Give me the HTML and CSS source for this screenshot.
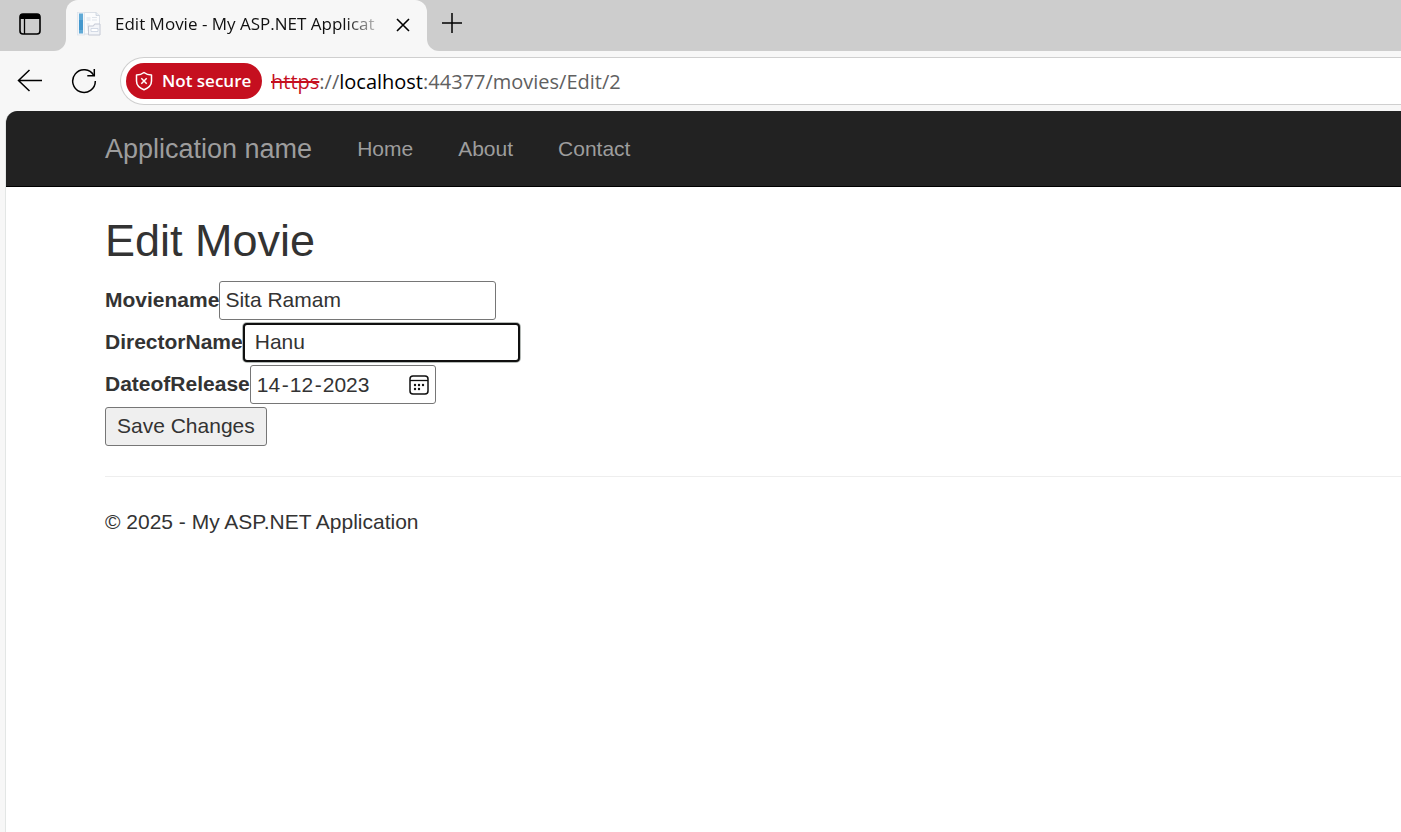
FILE: index.html
```html
<!DOCTYPE html>
<html lang="en">
<head>
<meta charset="utf-8">
<title>Edit Movie - My ASP.NET Application</title>
<link rel="stylesheet" href="styles.css">
</head>
<body>
<div class="browser">
  <div class="tab-strip">
    <button class="icon-button tab-actions" type="button" aria-label="Tab actions">
      <svg width="22" height="22" viewBox="0 0 22 22"><rect x="1" y="1" width="20" height="20" rx="3" fill="none" stroke="#000" stroke-width="1.6"/><path d="M1 6V4a3 3 0 0 1 3-3h14a3 3 0 0 1 3 3v2z"/><path d="M5.500 5v16" stroke="#000" stroke-width="1.300"/></svg>
    </button>
    <div class="tab">
      <svg class="favicon" width="24" height="24" viewBox="0 0 24 24">
        <path d="M7 .5h12l3.500 3V22H7z" fill="#fbfcfd" stroke="#d3d9e2" stroke-width=".8"/>
        <path d="M19 .5v3h3.500" fill="#e8eef5" stroke="#c9d0da" stroke-width=".8"/>
        <rect x=".5" y=".5" width="7" height="22.500" fill="#f1f5f9" stroke="#dbe2ea" stroke-width=".7"/>
        <path d="M2 1.500h4v20H2z" fill="#5fa9d6"/><path d="M2 8h4v10H2z" fill="#4397cd"/>
        <path d="M9.500 5h4v4h-4zM9.500 11h3v8h-2z" fill="#e9edf3"/>
        <path d="M15 5.500h5M15 8h5" stroke="#dfe4eb" stroke-width="1.200"/>
        <path d="M11.500 14h5l1-2H23v11H11.500z" fill="#f3f5f9" stroke="#c3c8d4" stroke-width="1"/>
        <path d="M14 16.500h7v3h-7z" fill="#fff" stroke="#c9d2df" stroke-width=".8"/>
      </svg>
      <span class="tab-title">Edit Movie - My ASP.NET Applicat</span>
      <button class="icon-button tab-close" type="button" aria-label="Close tab">
        <svg width="14" height="14" viewBox="0 0 14 14"><path d="M1 1l12 12M13 1L1 13" stroke="#000" stroke-width="1.6"/></svg>
      </button>
    </div>
    <button class="icon-button new-tab" type="button" aria-label="New tab">
      <svg width="22" height="22" viewBox="0 0 22 22"><path d="M11 1v20M1 11h20" stroke="#000" stroke-width="1.5"/></svg>
    </button>
  </div>
  <div class="toolbar">
    <button class="icon-button" type="button" aria-label="Back">
      <svg width="26" height="24" viewBox="0 0 26 24"><path d="M25 11.500H1.500M12.500 1L1.500 11.500 12.500 22" fill="none" stroke="#000" stroke-width="1.5"/></svg>
    </button>
    <button class="icon-button" type="button" aria-label="Refresh">
      <svg width="26" height="26" viewBox="0 0 26 26"><path d="M22.800 7.500A11.300 11.300 0 1 0 24.300 13" fill="none" stroke="#000" stroke-width="1.5"/><path d="M23.300 1v6.800h-7" fill="none" stroke="#000" stroke-width="1.5"/></svg>
    </button>
    <div class="address-bar">
      <button class="security" type="button">
        <svg width="18" height="20" viewBox="0 0 18 20"><path d="M9 1.500C7 3.200 4.500 4 1.500 4v6c0 4.500 3 7 7.500 8.700 4.500-1.700 7.500-4.200 7.500-8.700V4c-3 0-5.500-.8-7.500-2.500z" fill="none" stroke="#fff" stroke-width="1.5" stroke-linejoin="round"/><path d="M6.300 7.300l5.400 5.400m0-5.400l-5.400 5.400" stroke="#fff" stroke-width="1.5"/></svg>
        Not secure
      </button>
      <div class="url"><s>https</s>://<b>localhost</b>:44377/movies/Edit/2</div>
    </div>
  </div>
  <div class="page">
    <nav class="navbar">
      <a class="brand" href="#">Application name</a>
      <a href="#">Home</a>
      <a href="#">About</a>
      <a href="#">Contact</a>
    </nav>
    <main class="content">
      <h2>Edit Movie</h2>
      <form class="form">
        <div class="row"><label for="name">Moviename</label><input class="field" id="name" type="text" value="Sita Ramam"></div>
        <div class="row"><label for="director">DirectorName</label><input class="field field-active" id="director" type="text" value="Hanu"></div>
        <div class="row">
          <label for="day">DateofRelease</label>
          <div class="date">
            <input class="part" id="day" type="text" value="14" aria-label="Day of release">-<input class="part" type="text" value="12" aria-label="Month of release">-<input class="part part-year" type="text" value="2023" aria-label="Year of release">
            <button class="icon-button picker" type="button" aria-label="Show calendar">
              <svg width="20" height="20" viewBox="0 0 20 20"><rect x="1" y="1" width="18" height="18" rx="3" fill="none" stroke="#101010" stroke-width="1.5"/><path d="M1 5.500h18" stroke="#101010" stroke-width="1.3"/><g fill="#101010"><circle cx="6" cy="10" r="1.200"/><circle cx="10" cy="10" r="1.200"/><circle cx="14" cy="10" r="1.200"/><circle cx="6" cy="14" r="1.200"/><circle cx="10" cy="14" r="1.200"/></g></svg>
            </button>
          </div>
        </div>
        <button class="save" type="button">Save Changes</button>
      </form>
      <hr>
      <footer>© 2025 - My ASP.NET Application</footer>
    </main>
  </div>
</div>
</body>
</html>
```
FILE: styles.css
```css
* { box-sizing: border-box; }
body {
  margin: 0;
  overflow-x: hidden;
  font: 21px/30px "Liberation Sans", Arial, sans-serif;
  color: #333;
}
button, input { font: inherit; color: inherit; }
.browser {
  min-height: 100vh;
  display: flex;
  flex-direction: column;
  background: #f7f7f7;
}
.icon-button {
  display: flex;
  align-items: center;
  justify-content: center;
  padding: 0;
  border: 0;
  background: none;
}
.tab-strip {
  display: flex;
  height: 51px;
  background: linear-gradient(#cdcdcd 50%, #f7f7f7 50%);
}
.tab-actions {
  width: 66px;
  padding: 0 6px 3px 0;
  background: #cdcdcd;
  border-radius: 0 0 12px 0;
}
.tab {
  display: flex;
  align-items: center;
  width: 361px;
  padding: 0 17px 3px 11px;
  background: #f7f7f7;
  border-radius: 12px 12px 0 0;
}
.tab-title {
  flex: 1;
  margin: 0 10px 0 14px;
  white-space: nowrap;
  font: 17px/24px "Open Sans", "Noto Sans", sans-serif;
  color: #111;
  -webkit-mask-image: linear-gradient(90deg, #000 85%, transparent);
  mask-image: linear-gradient(90deg, #000 85%, transparent);
}
.tab-close { padding-top: 2px; }
.new-tab {
  flex: 1;
  justify-content: flex-start;
  padding: 0 0 5px 14px;
  background: #cdcdcd;
  border-radius: 0 0 0 12px;
}
.toolbar {
  display: flex;
  align-items: center;
  gap: 28px;
  height: 60px;
  padding-left: 17px;
}
.address-bar {
  flex: 1;
  display: flex;
  align-items: center;
  gap: 9px;
  height: 48px;
  margin-left: -5px;
  padding-left: 5px;
  background: #fff;
  border: 1px solid #cfcfcf;
  border-right: 0;
  border-radius: 24px 0 0 24px;
}
.security {
  display: flex;
  align-items: center;
  gap: 9px;
  width: 136px;
  height: 36px;
  padding: 0 0 0 9px;
  border: 0;
  border-radius: 18px;
  background: #c50f1f;
  color: #fff;
  font: 600 17px/24px "Open Sans", "Noto Sans", sans-serif;
  white-space: nowrap;
}
.url {
  padding-top: 2px;
  font: 20px/28px "Open Sans", "Noto Sans", sans-serif;
  color: #606060;
}
.url s { color: #c50f1f; text-decoration-thickness: 2px; }
.url b { font-weight: 400; color: #000; }
.page {
  flex: 1;
  margin-left: 5px;
  border-left: 1px solid #e3e6e5;
  border-top-left-radius: 12px;
  background: #fff;
  overflow: hidden;
}
.navbar {
  display: flex;
  align-items: center;
  gap: 45px;
  height: 76px;
  padding-left: 99px;
  background: #222;
  border-bottom: 1px solid #000;
}
.navbar a { color: #9d9d9d; text-decoration: none; }
.navbar .brand { font-size: 27px; }
.content { padding-left: 99px; }
h2 {
  margin: 29px 0 15px;
  font-size: 45px;
  line-height: 50px;
  font-weight: 400;
}
.form {
  display: flex;
  flex-direction: column;
  align-items: flex-start;
  gap: 3px;
}
.row { display: flex; }
label { font-weight: 700; line-height: 38px; }
.field {
  width: 277px;
  height: 39px;
  padding: 0 5px 2px;
  border: 1px solid #767676;
  border-radius: 3px;
  background: #fff;
}
.field-active {
  padding: 0 10px 2px;
  border: 2px solid #101010;
  border-radius: 4px;
  box-shadow: 0 0 0 1px #b5bab7;
}
.date {
  display: flex;
  align-items: center;
  width: 186px;
  height: 39px;
  padding: 0 6px 0 5px;
  border: 1px solid #767676;
  border-radius: 3px;
}
.part {
  width: 26px;
  height: 30px;
  padding: 0 0 0 1px;
  border: 0;
  background: none;
}
.part-year { width: 49px; }
.picker { margin-left: auto; }
.save {
  height: 39px;
  padding: 0 11px 2px;
  border: 1px solid #767676;
  border-radius: 3px;
  background: #efefef;
}
hr {
  margin: 30px 0;
  border: 0;
  border-top: 1px solid #eee;
}
```
